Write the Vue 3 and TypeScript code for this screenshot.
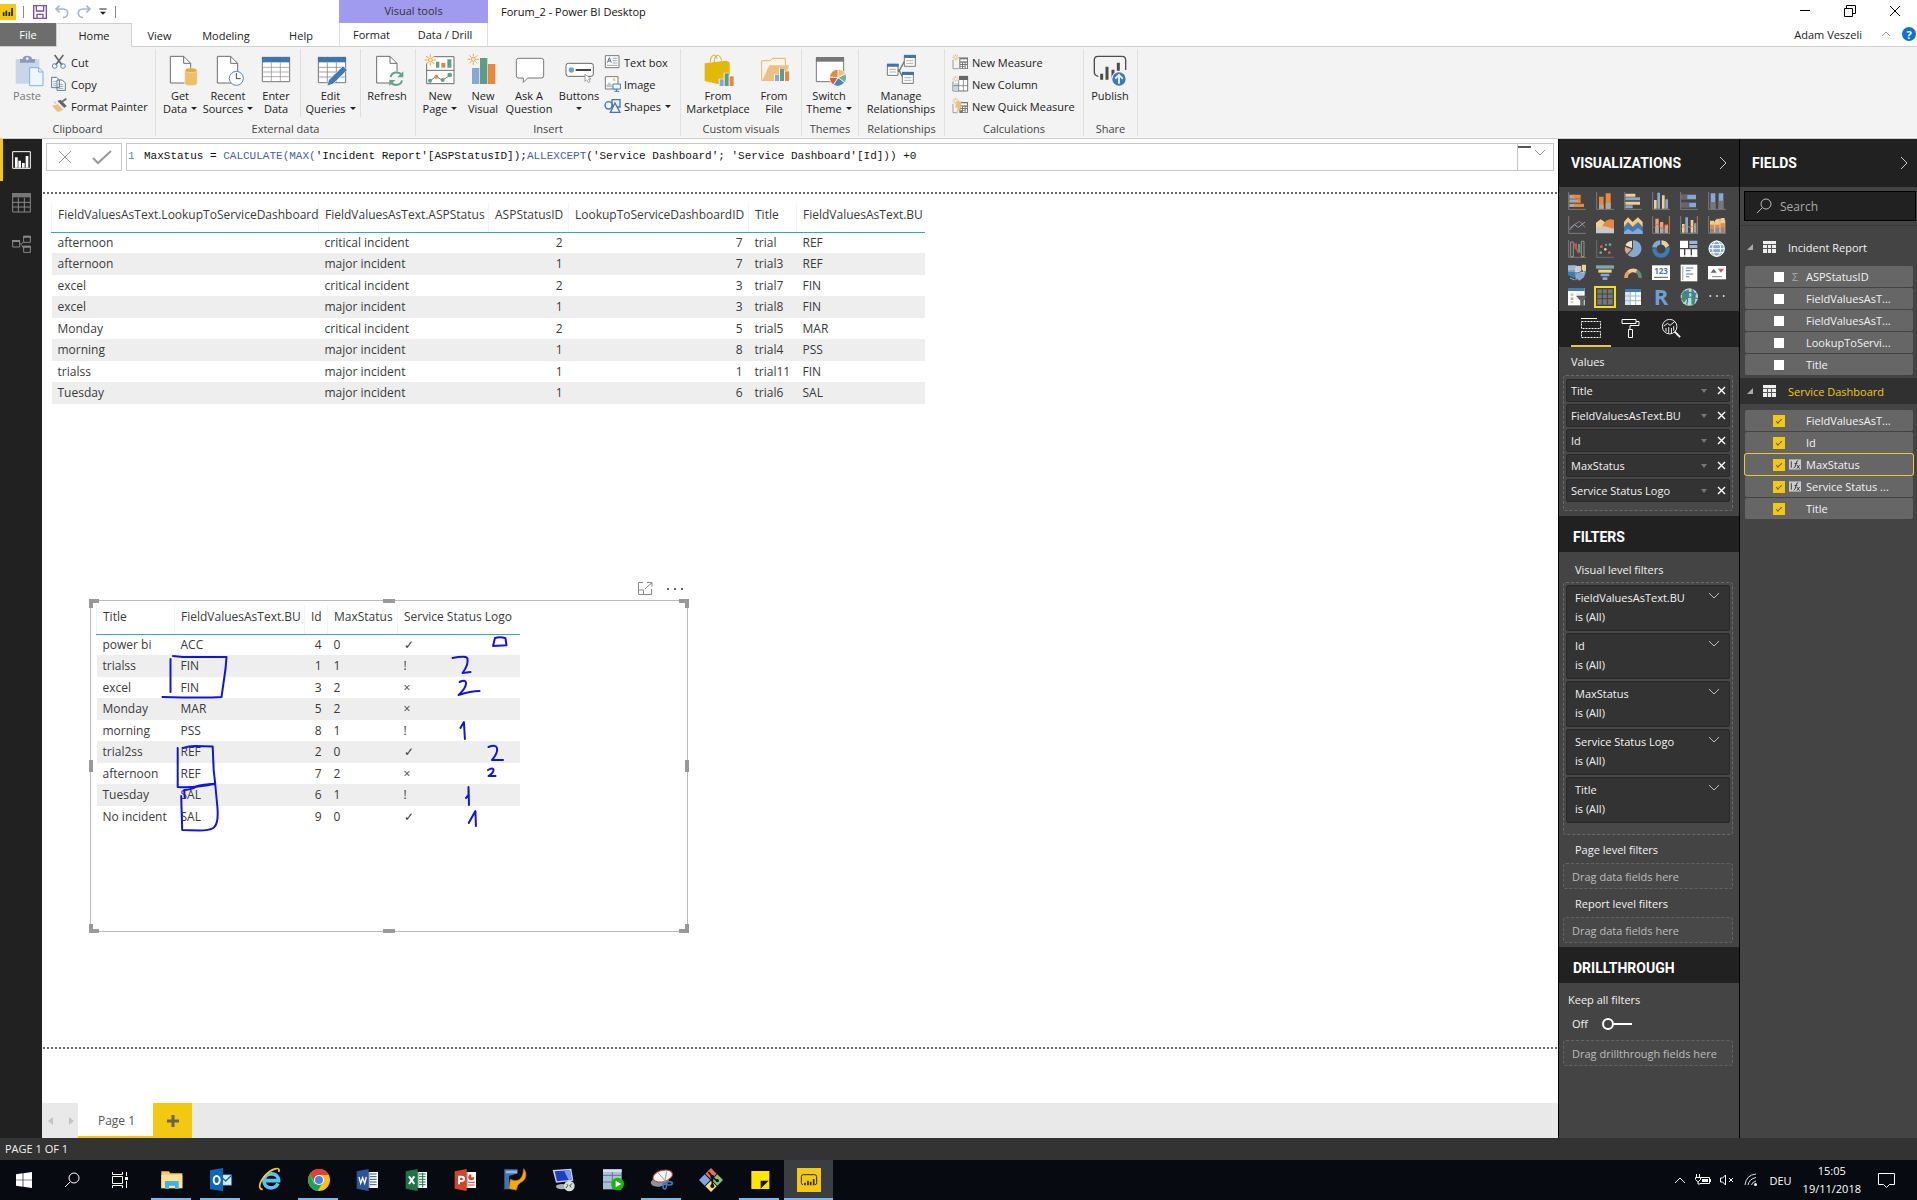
<script setup lang="ts">
import { ref } from 'vue'

interface Icon { box: string; art: string }
interface BigButton { icon: string; lines: string[]; menu?: boolean; width: number; rule?: boolean; dim?: boolean }
interface SmallButton { icon: string; text: string; menu?: boolean }
interface Group { name: string; width: number; inset: number; big: BigButton[]; small: SmallButton[] }
interface Field { name: string; checked: boolean; mark?: 'sum' | 'fx'; active?: boolean }
interface Entity { name: string; used?: boolean; fields: Field[] }
interface Task { icon: string; label: string; open?: boolean; active?: boolean }

const spark = (x: number, y: number) =>
  `<g stroke="#e8a94e" stroke-width="3" fill="none"><circle cx="${x}" cy="${y}" r="6" fill="#fbe6c4"/><path d="M${x} ${y - 17}v8M${x} ${y + 9}v8M${x - 17} ${y}h8M${x + 9} ${y}h8M${x - 12} ${y - 12}l6 6M${x + 6} ${y + 6}l6 6M${x - 12} ${y + 12}l6-6M${x + 6} ${y - 6}l6-6"/></g>`
const miniSpark = (x: number, y: number) =>
  `<path d="M${x} ${y - 10}v20M${x - 10} ${y}h20M${x - 7} ${y - 7}l14 14M${x - 7} ${y + 7}l14-14" stroke="#e8b46a" stroke-width="2.4"/><circle cx="${x}" cy="${y}" r="3" fill="#fff"/>`
const axes = '<path d="M2 0V52H54" fill="none" stroke="#8a8a8a" stroke-width="2.4"/>'
const sheet = (x: number) =>
  `<path d="M${x} 169h40l21 21v59h-61z" fill="#fff" stroke="#6d6d6d" stroke-width="3"/><path d="M${x + 40} 169v21h21" fill="none" stroke="#6d6d6d" stroke-width="3"/>`
const office = (c: string, c2: string, paper: string) =>
  `<path d="M30 12H66V60H30z" fill="#fff"/>${paper}<path d="M2 10L38 3V69L2 62z" fill="${c}"/><path d="M38 12h2v48h-2z" fill="${c2}"/>`

const icons: Record<string, Icon> = {
  paste: { box: '32 162 96 96', art: '<path d="M46 177h71v74H46z" fill="#c9d5ea"/><path d="M59 177h8c0-13 28-13 28 0h9v11H59z" fill="#8a9bb5"/><circle cx="81" cy="176" r="4" fill="#f3f3f3"/><path d="M88 203h28l12 12v42H88z" fill="#eef5fd" stroke="#86b0d8" stroke-width="3"/><path d="M115 203v13h13" fill="none" stroke="#86b0d8" stroke-width="3"/>' },
  getData: { box: '492 162 96 96', art: sheet(511) + '<path d="M554 212v38c0 10 38 10 38 0v-38z" fill="#eebf6b" stroke="#f3f3f3" stroke-width="2"/><ellipse cx="573" cy="211" rx="18" ry="7" fill="#e2a94b" stroke="#f9dfa8" stroke-width="2"/>' },
  recent: { box: '636 162 96 96', art: sheet(652) + '<circle cx="709" cy="235" r="21" fill="#fff" stroke="#5b86b9" stroke-width="3"/><path d="M709 219v17h13" fill="none" stroke="#444" stroke-width="3"/>' },
  enter: { box: '780 162 96 96', art: '<path d="M787 172h82v73h-82z" fill="#fff" stroke="#777" stroke-width="3"/><path d="M786 171h84v16h-84z" fill="#3f74ad"/><path d="M787 202h82M787 216h82M787 230h82M814 187v58M841 187v58" stroke="#999" stroke-width="2.4"/>' },
  edit: { box: '942 162 96 96', art: '<path d="M952 172h82v76h-82z" fill="#fff" stroke="#777" stroke-width="3"/><path d="M951 171h84v16h-84z" fill="#3f74ad"/><path d="M952 202h82M952 216h82M952 231h82M979 187v61M1006 187v61" stroke="#888" stroke-width="2.4"/><path d="M978 258l5-18 43-42 13 12-43 42z" fill="#3f7ab8" stroke="#f3f3f3" stroke-width="2"/>' },
  refresh: { box: '1112 162 96 96', art: sheet(1129) + '<circle cx="1188" cy="236" r="22" fill="#f3f3f3"/><path d="M1171 231c3-16 25-18 33-6M1205 241c-3 16-25 18-33 6" fill="none" stroke="#6aa088" stroke-width="6"/><path d="M1209 214v18h-18zM1167 258v-18h18z" fill="#6aa088"/>' },
  newPage: { box: '74 162 96 96', art: '<path d="M82 170h82v81H82z" fill="#fff" stroke="#6d6d6d" stroke-width="3"/><path d="M82 211h82" stroke="#6d6d6d" stroke-width="3"/><path d="M110 185h10v18h-10zM144 178h12v25h-12z" fill="#5aa08c"/><path d="M126 189h12v14h-12z" fill="#e8833a"/><path d="M90 244l21-15 18 12 27-18" fill="none" stroke="#777" stroke-width="3"/><g fill="#5aa08c"><circle cx="92" cy="242" r="6"/><circle cx="130" cy="240" r="6"/><circle cx="151" cy="225" r="7"/></g><circle cx="111" cy="230" r="6" fill="#e8833a"/><circle cx="93" cy="180" r="15" fill="#f8f1e5"/>' + spark(93, 180) },
  newVisual: { box: '200 162 96 96', art: '<path d="M215 204h22v48h-22z" fill="#86a8d4"/><path d="M239 174h22v78h-22z" fill="#5d9d88"/><path d="M263 192h22v60h-22z" fill="#e8883f"/>' + spark(219, 178) },
  ask: { box: '339 162 96 96', art: '<path d="M355 175h69q7 0 7 7v45q0 7-7 7h-41l-13 13v-13h-15q-6 0-6-7v-45q0-7 6-7z" fill="#fff" stroke="#777" stroke-width="3"/>' },
  buttons: { box: '487 162 96 96', art: '<rect x="496" y="190" width="82" height="39" rx="7" fill="#fff" stroke="#666" stroke-width="3"/><circle cx="512" cy="210" r="8" fill="#6f9fd0"/><path d="M525 210h46" stroke="#444" stroke-width="6"/><path d="M553 222v22l5-5 5 9 5-3-4-8h7z" fill="#fff" stroke="#777" stroke-width="2"/>' },
  market: { box: '907 162 96 96', art: '<path d="M932 186c0-22 16-28 20-10M944 186c0-24 16-28 22-4" fill="none" stroke="#dba710" stroke-width="3"/><path d="M915 190l64-8 11 5v56l-20 13-55-13z" fill="#e2b90a"/><path d="M957 236h15v22h-15zM972 218h15v40h-15zM987 226h16v32h-16z" fill="#f3f3f3"/><path d="M960 238h12v20h-12z" fill="#86a8d4"/><path d="M975 220h12v38h-12z" fill="#5d9d88"/><path d="M990 229h12v29h-12z" fill="#e8883f"/>' },
  fromFile: { box: '1071 162 96 96', art: '<path d="M1082 241v-59h26l7-7h38v66z" fill="#fdf5e6" stroke="#e8b36c" stroke-width="3"/><path d="M1084 241l21-45h60l-18 45z" fill="#eec07f"/><path d="M1119 222h15v21h-15zM1134 205h15v38h-15zM1149 212h16v31h-16z" fill="#f3f3f3"/><path d="M1122 224h12v19h-12z" fill="#86a8d4"/><path d="M1137 206h12v37h-12z" fill="#5d9d88"/><path d="M1152 214h12v29h-12z" fill="#e8883f"/>' },
  theme: { box: '36 162 96 96', art: '<path d="M46 173h82v72H46z" fill="#fff" stroke="#777" stroke-width="3"/><path d="M45 171h84v14H45z" fill="#777"/><circle cx="111" cy="233" r="26" fill="#f3f3f3"/><path d="M111 233V209a24 24 0 0 1 21 12z" fill="#eec07f"/><path d="M111 233l22-11a24 24 0 0 1-2 24z" fill="#77b393"/><path d="M111 233l19 14a24 24 0 0 1-32 7z" fill="#4a83c0"/><path d="M111 233l-13 21a24 24 0 0 1-11-22z" fill="#d3603c"/><path d="M111 233l-24-2a24 24 0 0 1 24-22z" fill="#e8883f"/><path d="M111 233V208M111 233l23-12M111 233l20 15M111 233l-14 22M111 233l-25-2" stroke="#f3f3f3" stroke-width="3"/>' },
  relation: { box: '252 162 96 96', art: '<path d="M290 210h6l14-26h6M290 214h6l8 16h6" fill="none" stroke="#777" stroke-width="4"/><g fill="#fff" stroke="#777" stroke-width="3"><path d="M259 193h32v33h-32zM310 166h33v33h-33zM304 217h33v33h-33z"/></g><path d="M258 191h35v9h-35zM309 165h36v9h-36zM303 216h36v9h-36z" fill="#3f74ad"/><path d="M265 208h20M265 216h20M316 182h21M316 190h21M310 233h21M310 241h21" stroke="#999" stroke-width="2.4"/>' },
  publish: { box: '879 162 96 96', art: '<path d="M892 229q-12-2-12-12v-37q0-11 11-11h72q11 0 11 11v30" fill="none" stroke="#4c4c4c" stroke-width="4"/><path d="M902 221v18M918 200v39M936 209v26M952 188v24" stroke="#4c4c4c" stroke-width="9"/><circle cx="954" cy="237" r="23" fill="#f3f3f3"/><circle cx="954" cy="237" r="20" fill="#3f7ab8"/><path d="M954 251v-24M943 236l11-11 11 11" fill="none" stroke="#fff" stroke-width="5"/>' },
  cut: { box: '153 163 48 48', art: '<path d="M164 166l22 30M190 166l-23 30" stroke="#666" stroke-width="5" fill="none"/><g fill="none" stroke="#5b8cc2" stroke-width="3"><circle cx="164" cy="199" r="7"/><circle cx="189" cy="199" r="7"/></g>' },
  copy: { box: '153 229 48 48', art: '<g fill="#fff" stroke="#5c7590" stroke-width="3"><path d="M155 233h15l8 8v23h-23zM171 241h16l9 9v22h-25z"/></g><path d="M160 245h9M160 252h9M160 258h9M176 254h14M176 260h14M176 266h14" stroke="#5c7590" stroke-width="2"/>' },
  painter: { box: '153 295 48 48', art: '<path d="M156 318l18-4 16 16-13 6-5 0z" fill="#eec07f"/><path d="M172 304l10-4 18 19-7 6z" fill="#666"/><path d="M185 307l14-10" stroke="#777" stroke-width="6"/><path d="M162 306l7 6" stroke="#aaa" stroke-width="3"/>' },
  textBox: { box: '613 162 48 48', art: '<path d="M617 167h41v36h-41z" fill="#fff" stroke="#777" stroke-width="3"/><path d="M623 188l6-15 6 15M625 183h8" fill="none" stroke="#3f74ad" stroke-width="3"/><path d="M639 175h14M639 182h14M639 189h14M622 196h31" stroke="#777" stroke-width="2"/>' },
  image: { box: '613 228 48 48', art: '<path d="M617 230h38v37h-38z" fill="#fff" stroke="#777" stroke-width="3"/><path d="M620 256l9-10 12 16h-21z" fill="#b7c7d8"/><circle cx="643" cy="239" r="4" fill="#eec07f"/><path d="M640 252h22v15h-22z" fill="#fff" stroke="#3f7ab8" stroke-width="3"/><path d="M651 268v6M644 274h15" stroke="#3f7ab8" stroke-width="3"/>' },
  shapes: { box: '613 294 48 48', art: '<g fill="none" stroke="#3f7ab8" stroke-width="4"><circle cx="627" cy="316" r="11"/><path d="M637 299h24v22h-24z"/><path d="M646 309l15 28h-29z" fill="#f3f3f3"/></g>' },
  measure: { box: '455 163 48 48', art: '<path d="M458 181v26h17M475 174h28" fill="none" stroke="#888" stroke-width="2.4"/><path d="M477 175h26v33h-26z" fill="#777"/><path d="M480 179h20v6h-20z" fill="#fff"/><path d="M480 189h5v4h-5zM488 189h5v4h-5zM496 189h4v4h-4zM480 196h5v4h-5zM488 196h5v4h-5zM496 196h4v10h-4zM480 202h5v4h-5zM488 202h5v4h-5z" fill="#fff"/>' + miniSpark(466, 173) },
  column: { box: '455 229 48 48', art: '<path d="M458 246v28h44v-44h-24" fill="#fff" stroke="#777" stroke-width="3"/><path d="M459 250h16v23h-16z" fill="#c9d8e8"/><path d="M476 229h27v12h-27z" fill="#666"/><path d="M475 241v33M489 241v33M459 258h43" stroke="#777" stroke-width="2.4"/>' + miniSpark(466, 238) },
  quick: { box: '455 295 48 48', art: '<path d="M458 313v26h14" fill="none" stroke="#888" stroke-width="2.4"/><path d="M477 307h26v33h-26z" fill="#777"/><path d="M480 311h20v6h-20z" fill="#fff"/><path d="M480 321h5v4h-5zM488 321h5v4h-5zM496 321h4v4h-4zM480 328h5v4h-5zM488 328h5v4h-5zM496 328h4v10h-4zM488 334h5v4h-5z" fill="#fff"/><path d="M470 305h14l-5 13h8l-20 24 5-18h-8z" fill="#eec07f"/>' + miniSpark(466, 304) },

  stackBar: { box: '0 0 54 54', art: axes + '<path d="M4 8h18v12H4zM4 35h18v10H4z" fill="#a9a9a9"/><path d="M4 22h32v10H4z" fill="#a9a9a9"/><path d="M16 8h22v12H16zM28 22h10v10H28zM18 35h30v10H18z" fill="#e8883f"/>' },
  stackCol: { box: '0 0 54 54', art: axes + '<path d="M9 14h14v36H9zM29 4h15v46H29z" fill="#e8883f"/><path d="M9 38h14v12H9zM29 32h15v18H29z" fill="#a9a9a9"/>' },
  clusterBar: { box: '0 0 54 54', art: axes + '<path d="M4 5h30v9H4zM4 29h44v9H4z" fill="#eed08a"/><path d="M4 16h44v9H4zM4 40h22v9H4z" fill="#86a8d4"/>' },
  clusterCol: { box: '0 0 54 54', art: axes + '<path d="M6 24h8v26H6zM30 10h8v40h-8z" fill="#eed08a"/><path d="M16 2h8v48h-8zM40 22h8v28h-8z" fill="#86a8d4"/>' },
  fullBar: { box: '0 0 54 54', art: axes + '<path d="M4 8h44v14H4zM4 32h44v14H4z" fill="#86a8d4"/><path d="M4 8h18v14H4zM4 32h24v14H4z" fill="#666"/>' },
  fullCol: { box: '0 0 54 54', art: axes + '<path d="M8 4h14v46H8zM32 4h14v46H32z" fill="#86a8d4"/><path d="M8 30h14v20H8zM32 26h14v24H32z" fill="#777"/>' },
  line: { box: '0 0 54 54', art: axes + '<path d="M5 42l14-16 12 8 20-16" fill="none" stroke="#86a8d4" stroke-width="3"/><path d="M5 36l14-10 16-10 16 18" fill="none" stroke="#c88" stroke-width="2.4"/>' },
  area: { box: '0 0 54 54', art: '<path d="M0 20l14-10 16 10v30H0z" fill="#eed08a"/><path d="M20 28Q32 4 54 12v38H10z" fill="#e8883f"/><path d="M0 36l22-6 32 8v14H0z" fill="#c9c9c9"/>' },
  stackArea: { box: '0 0 54 54', art: '<path d="M0 18L12 4l14 14L42 4l14 14v14H0z" fill="#eed08a"/><path d="M0 34l12-16 14 14 16-14 14 16v20H0z" fill="#3f7ab8"/><path d="M0 48l12-10 14 10 16-12 14 10v8H0z" fill="#86a8d4"/><path d="M0 32l12-14 14 14 16-14 14 14" fill="none" stroke="#e8883f" stroke-width="3"/>' },
  lineStack: { box: '0 0 54 54', art: axes + '<path d="M52 0v52" stroke="#e8883f" stroke-width="2.4"/><path d="M10 8h10v42H10zM24 18h10v32H24zM38 26h10v24H38z" fill="#e9a27a"/><path d="M10 32h10v18H10zM24 36h10v14H24zM38 38h10v12H38z" fill="#aaa"/><path d="M4 36l12-12 14 14 18-14" fill="none" stroke="#c55" stroke-width="2.4"/>' },
  lineCluster: { box: '0 0 54 54', art: axes + '<path d="M52 0v52" stroke="#e8883f" stroke-width="2.4"/><path d="M6 24h8v26H6zM32 12h8v38h-8z" fill="#eed08a"/><path d="M16 4h8v46h-8zM42 22h7v28h-7z" fill="#86a8d4"/><path d="M4 38l14-14 12 12 18-12" fill="none" stroke="#d97f4a" stroke-width="2.4"/>' },
  ribbonChart: { box: '0 0 54 54', art: axes + '<path d="M6 18h12l8-10h10l6 4h10v38H6z" fill="#d9b79a"/><path d="M6 14h12v12H6zM22 12h12v14H22zM38 6h12v16H38z" fill="#eed08a"/><path d="M6 26h12v12H6zM22 26h12v10H22zM38 22h12v12H38z" fill="#e8883f"/><path d="M6 38h12v12H6zM22 36h12v14H22zM38 34h12v16H38z" fill="#888"/>' },
  waterfall: { box: '0 0 54 54', art: axes + '<path d="M8 6h8v44H8zM40 4h8v46h-8z" fill="none" stroke="#aaa" stroke-width="2.4"/><path d="M20 10h7v18h-7z" fill="#d54f4f"/><path d="M30 12h7v26h-7z" fill="#5d9d78"/><path d="M16 8l16 32" stroke="#d54f4f" stroke-width="4"/>' },
  scatter: { box: '0 0 54 54', art: '<path d="M2 0V52H54" fill="none" stroke="#777" stroke-width="2.4"/><g fill="#d9694f"><circle cx="16" cy="20" r="4"/><circle cx="40" cy="38" r="4"/></g><g fill="#62b394"><circle cx="14" cy="38" r="4"/><circle cx="42" cy="14" r="4"/></g><circle cx="28" cy="28" r="4" fill="#eed08a"/><circle cx="30" cy="14" r="3" fill="#86a8d4"/>' },
  pie: { box: '0 0 54 54', art: '<path d="M27 27V1a25 25 0 1 1-16 44z" fill="#86a8d4"/><path d="M24 24V2A24 24 0 0 0 4 16z" fill="#f6dfc0"/><path d="M23 28L3 20a24 24 0 0 0 6 22z" fill="#dfa28e"/>' },
  donut: { box: '0 0 54 54', art: '<circle cx="27" cy="27" r="20" fill="none" stroke="#3f7ab8" stroke-width="13"/><path d="M27 7a20 20 0 0 1 19 14" fill="none" stroke="#eed08a" stroke-width="13"/><path d="M7 24A20 20 0 0 1 24 7" fill="none" stroke="#86a8d4" stroke-width="13"/><path d="M27 0v16M46 22l8-4M0 24h14" stroke="#444" stroke-width="3"/>' },
  treemap: { box: '0 0 54 54', art: '<path d="M0 2h24v22H0zM0 28h12v22H0zM16 28h16v22H16zM36 28h16v22H36z" fill="#fff"/><path d="M28 2h24v10H28zM28 15h24v9H28z" fill="#9ab7dc"/><path d="M2 48h50" stroke="#fff" stroke-width="4"/>' },
  map: { box: '0 0 54 54', art: '<circle cx="26" cy="26" r="24" fill="#86a8d4"/><g fill="none" stroke="#fff" stroke-width="3"><circle cx="26" cy="26" r="23"/><ellipse cx="26" cy="26" rx="12" ry="23"/><path d="M3 26h46M6 14h40M6 38h40"/></g>' },
  filledMap: { box: '0 0 54 54', art: '<path d="M0 4h22l4 8-6 8H0z" fill="#9ab7dc"/><path d="M24 6h16v14l-12 6-8-4z" fill="#c9c9c9"/><path d="M42 2h12v18l-8 4-4-8z" fill="#eed08a"/><path d="M0 24h22l6 10-10 8L0 34z" fill="#3f7ab8"/><path d="M26 28l28-6-6 18-14 10-10-8z" fill="#86a8d4"/><path d="M0 22h24l24 4M24 4v44M6 42l14 6" stroke="#ddd" stroke-width="2" fill="none"/>' },
  funnel: { box: '0 0 54 54', art: '<path d="M0 4h54v10H0z" fill="#7fa8a8"/><path d="M7 17h40v9H7z" fill="#eed08a"/><path d="M14 29h26v8H14zM20 40h14v8H20z" fill="#86a8d4"/>' },
  gauge: { box: '0 0 54 54', art: '<path d="M6 42a21 21 0 0 1 12-20" fill="none" stroke="#e8a060" stroke-width="11"/><path d="M14 24a22 22 0 0 1 24-2" fill="none" stroke="#eed08a" stroke-width="11"/><path d="M38 22a22 22 0 0 1 10 20" fill="none" stroke="#5f8f78" stroke-width="11"/>' },
  card: { box: '0 0 54 54', art: '<path d="M0 4h54v44H0z" fill="#fff"/><path d="M6 40h42" stroke="#555" stroke-width="3"/><text x="27" y="29" text-anchor="middle" font-family="Open Sans" font-weight="700" font-size="24" fill="#3f7ab8">123</text>' },
  multiCard: { box: '0 0 54 54', art: '<path d="M2 2h50v50H2z" fill="#fff"/><path d="M8 6v42" stroke="#bbb" stroke-width="4"/><path d="M18 12h22M18 30h22" stroke="#86a8d4" stroke-width="5"/><path d="M18 20h14M18 38h10" stroke="#777" stroke-width="3"/>' },
  kpi: { box: '0 0 54 54', art: '<path d="M0 6h54v40H0z" fill="#fff"/><path d="M8 26l9-12 9 12z" fill="#666"/><path d="M30 14h18l-9 12z" fill="#d54f4f"/><path d="M12 38h30" stroke="#888" stroke-width="3"/>' },
  slicer: { box: '0 0 54 54', art: '<path d="M0 0h50v52H0z" fill="#fff"/><path d="M0 0h50v9H0z" fill="#3f7ab8"/><path d="M8 16h8v8H8zM8 40h8v6H8z" fill="#eec07f"/><path d="M8 28h8v8H8z" fill="#aac"/><path d="M22 18h22M22 32h12" stroke="#ccc" stroke-width="2"/><path d="M26 24h32L46 38v16h-8V38z" fill="#666" stroke="#444" stroke-width="2"/>' },
  table: { box: '0 0 54 54', art: '<path d="M4 4h46v46H4z" fill="#777"/><path d="M4 18h46M4 32h46M19 4v46M34 4v46" stroke="#444" stroke-width="3"/>' },
  matrix: { box: '0 0 54 54', art: '<path d="M3 3h48v48H3z" fill="#fff"/><path d="M3 3h48v9H3z" fill="#3f7ab8"/><path d="M3 12h16v39H3z" fill="#d6e3f2"/><path d="M3 24h48M3 38h48M19 12v39M35 12v39" stroke="#9ab7dc" stroke-width="3"/>' },
  rScript: { box: '0 0 54 54', art: '<text x="27" y="51" text-anchor="middle" font-family="Open Sans" font-weight="700" font-size="66" fill="#6f9fd0">R</text>' },
  arcgis: { box: '0 0 54 54', art: '<circle cx="28" cy="27" r="26" fill="#c7d8d8"/><path d="M8 12l18-8 2 20-16 20-8-10zM34 6l14 12-6 30-8 2z" fill="#3f9a4a"/><path d="M4 20Q28 8 50 18M3 34Q28 22 53 32M12 8Q28 24 20 50M36 3Q50 26 40 50" fill="none" stroke="#3f7ab8" stroke-width="4"/>' },
  more: { box: '0 0 54 54', art: '<g fill="#ddd"><circle cx="7" cy="24" r="3"/><circle cx="27" cy="24" r="3"/><circle cx="47" cy="24" r="3"/></g>' },

  explorer: { box: '477 384 72 72', art: '<path d="M481 394h22l5 6h36v44h-63z" fill="#f6c75a"/><path d="M481 404h63v41h-63z" fill="#fde293"/><path d="M492 447v-24h41v24h-11v-10h-18v10z" fill="#3fb3e6"/>' },
  outlook: { box: '624 384 72 72', art: '<path d="M655 404h37v32h-37z" fill="#dbe9f6" stroke="#0a66b8" stroke-width="2"/><path d="M660 410l14 13 18-17" fill="none" stroke="#0a66b8" stroke-width="4"/><path d="M627 391l39-7v70l-39-7z" fill="#0a66b8"/><ellipse cx="647" cy="420" rx="9" ry="12" fill="none" stroke="#fff" stroke-width="6"/>' },
  ie: { box: '771 384 72 72', art: '<path d="M789 422h44c0-26-42-28-44 0 0 26 34 28 42 8" fill="none" stroke="#56c4f4" stroke-width="11"/><path d="M833 396c8-20-24-8-40 10-20 22-22 42-8 42" fill="none" stroke="#f5c92c" stroke-width="5"/>' },
  chrome: { box: '918 384 72 72', art: '<circle cx="954" cy="420" r="33" fill="#fbc116"/><path d="M926 403A33 33 0 0 1 983 404H954z" fill="#dc4437"/><path d="M926 403A33 33 0 0 0 950 453l15-26-26 4z" fill="#1da05a"/><path d="M926 403l16 28 12-27z" fill="#1da05a"/><path d="M926 403A33 33 0 0 1 983 404H950l-12 14z" fill="#dc4437"/><circle cx="954" cy="420" r="15" fill="#fff"/><circle cx="954" cy="420" r="12" fill="#4a80ea"/>' },
  word: { box: '0 0 72 72', art: office('#2a5699', '#173a70', '<path d="M42 18h20M42 26h20M42 34h20M42 42h20M42 50h20" stroke="#2a5699" stroke-width="3"/>') + '<path d="M9 27l5 19 6-17 6 17 5-19" fill="none" stroke="#fff" stroke-width="4"/>' },
  excel: { box: '0 0 72 72', art: office('#1f7246', '#0f5030', '<path d="M42 18h20M42 26h20M42 34h20M42 42h20M42 50h20M53 14v44" stroke="#1f7246" stroke-width="3"/>') + '<path d="M12 25l16 23M28 25L12 48" fill="none" stroke="#fff" stroke-width="6"/>' },
  powerpoint: { box: '0 0 72 72', art: office('#d24625', '#a33316', '<circle cx="52" cy="28" r="9" fill="#d24625"/><path d="M52 28V17h11v11z" fill="#fff"/><path d="M42 43h20M42 51h20" stroke="#d24625" stroke-width="3"/>') + '<path d="M15 49V26h7c11 0 11 13 0 13h-6" fill="none" stroke="#fff" stroke-width="6"/>' },
  sync: { box: '0 0 72 72', art: '<path d="M4 4h40v12L18 24v40H4z" fill="#3a76b8"/><path d="M8 8h34v8H8z" fill="#8db9e4"/><path d="M62 2c12 14 8 34-10 42l-8 8-4 14-22-4 4-28 12 4c16 0 26-8 28-36z" fill="#f5a811" stroke="#c97a00" stroke-width="2"/>' },
  remote: { box: '0 0 72 72', art: '<path d="M2 6l56-4 6 36-52 6z" fill="#c9d3e6"/><path d="M8 10l46-3 5 28-44 5z" fill="#1c3fc4"/><path d="M36 8l18-1 5 28-9 1z" fill="#7d98ee"/><ellipse cx="30" cy="56" rx="18" ry="8" fill="#a8b0b8"/><circle cx="52" cy="54" r="16" fill="#d9ddd9"/><path d="M42 60l6-8-4-3M60 46l-7 8 5 4" fill="none" stroke="#335a33" stroke-width="3"/>' },
  server: { box: '0 0 72 72', art: '<path d="M6 4h56v60H6z" fill="#a9bfd6"/><path d="M6 22h56M6 42h56M34 4v60" stroke="#5c7590" stroke-width="3"/><path d="M6 4h56v8H6z" fill="#d3e0ee"/><circle cx="50" cy="48" r="19" fill="#18b50b"/><path d="M44 38v20l17-10z" fill="#fff"/>' },
  snip: { box: '0 0 72 72', art: '<ellipse cx="30" cy="40" rx="28" ry="15" fill="#8d9299" transform="rotate(-14 30 40)"/><ellipse cx="38" cy="24" rx="30" ry="17" fill="#f5f5f5" stroke="#c84040" stroke-width="3" transform="rotate(-16 38 24)"/><path d="M24 14l26 30M50 10l-6 34" stroke="#999" stroke-width="3"/><g fill="none" stroke="#2f7fb8" stroke-width="5"><ellipse cx="44" cy="54" rx="5" ry="9"/><ellipse cx="58" cy="46" rx="9" ry="5"/></g>' },
  git: { box: '0 0 72 72', art: '<path d="M36 0l17 17-17 17-17-17z" fill="#e86a5e"/><path d="M17 19l17 17-17 17L0 36z" fill="#7ea6e8"/><path d="M55 19l17 17-17 17-17-17z" fill="#86c46a"/><path d="M36 38l17 17-17 17-17-17z" fill="#f7dc7a"/><path d="M28 12l12 14v28M40 28l14 10" fill="none" stroke="#111" stroke-width="5"/><g fill="#111"><circle cx="40" cy="27" r="6"/><circle cx="40" cy="54" r="6"/><circle cx="55" cy="38" r="5"/></g>' },
  sticky: { box: '0 0 72 72', art: '<path d="M10 9h54v54H10z" fill="#ffe600"/><path d="M38 38h24L38 62z" fill="#111"/>' },
  powerbi: { box: '0 0 72 72', art: '<path d="M0 0h72v72H0z" fill="#f2c811"/><path d="M18 50q-5 0-5-6V26q0-6 6-6h34q6 0 6 6v18q0 6-5 6" fill="none" stroke="#2b2b2b" stroke-width="3"/><path d="M24 44v8M33 38v14M41 41v11M50 33v19" stroke="#2b2b2b" stroke-width="5"/>' },
}

const groups: Group[] = [
  { name: 'Clipboard', width: 156, inset: 3, big: [{ icon: 'paste', lines: ['Paste'], width: 48, dim: true }], small: [{ icon: 'cut', text: 'Cut' }, { icon: 'copy', text: 'Copy' }, { icon: 'painter', text: 'Format Painter' }] },
  { name: 'External data', width: 260, inset: 0, big: [
    { icon: 'getData', lines: ['Get', 'Data'], menu: true, width: 48 },
    { icon: 'recent', lines: ['Recent', 'Sources'], menu: true, width: 48 },
    { icon: 'enter', lines: ['Enter', 'Data'], width: 49, rule: true },
    { icon: 'edit', lines: ['Edit', 'Queries'], menu: true, width: 60, rule: true },
    { icon: 'refresh', lines: ['Refresh'], width: 52 }], small: [] },
  { name: 'Insert', width: 265, inset: 2, big: [
    { icon: 'newPage', lines: ['New', 'Page'], menu: true, width: 44 },
    { icon: 'newVisual', lines: ['New', 'Visual'], width: 42 },
    { icon: 'ask', lines: ['Ask A', 'Question'], width: 50 },
    { icon: 'buttons', lines: ['Buttons', ''], menu: true, width: 50 }],
    small: [{ icon: 'textBox', text: 'Text box' }, { icon: 'image', text: 'Image' }, { icon: 'shapes', text: 'Shapes', menu: true }] },
  { name: 'Custom visuals', width: 121, inset: 1, big: [{ icon: 'market', lines: ['From', 'Marketplace'], width: 72 }, { icon: 'fromFile', lines: ['From', 'File'], width: 40 }], small: [] },
  { name: 'Themes', width: 57, inset: 1, big: [{ icon: 'theme', lines: ['Switch', 'Theme'], menu: true, width: 52 }], small: [] },
  { name: 'Relationships', width: 86, inset: 1, big: [{ icon: 'relation', lines: ['Manage', 'Relationships'], width: 82 }], small: [] },
  { name: 'Calculations', width: 139, inset: 7, big: [], small: [{ icon: 'measure', text: 'New Measure' }, { icon: 'column', text: 'New Column' }, { icon: 'quick', text: 'New Quick Measure' }] },
  { name: 'Share', width: 54, inset: 1, big: [{ icon: 'publish', lines: ['Publish'], width: 50 }], small: [] },
]

const incidentHeads = ['FieldValuesAsText.LookupToServiceDashboard', 'FieldValuesAsText.ASPStatus', 'ASPStatusID', 'LookupToServiceDashboardID', 'Title', 'FieldValuesAsText.BU']
const incidents = [
  ['afternoon', 'critical incident', '2', '7', 'trial', 'REF'],
  ['afternoon', 'major incident', '1', '7', 'trial3', 'REF'],
  ['excel', 'critical incident', '2', '3', 'trial7', 'FIN'],
  ['excel', 'major incident', '1', '3', 'trial8', 'FIN'],
  ['Monday', 'critical incident', '2', '5', 'trial5', 'MAR'],
  ['morning', 'major incident', '1', '8', 'trial4', 'PSS'],
  ['trialss', 'major incident', '1', '1', 'trial11', 'FIN'],
  ['Tuesday', 'major incident', '1', '6', 'trial6', 'SAL'],
]
const serviceHeads = ['Title', 'FieldValuesAsText.BU', 'Id', 'MaxStatus', 'Service Status Logo']
const services = [
  ['power bi', 'ACC', '4', '0', '✓'],
  ['trialss', 'FIN', '1', '1', '!'],
  ['excel', 'FIN', '3', '2', '×'],
  ['Monday', 'MAR', '5', '2', '×'],
  ['morning', 'PSS', '8', '1', '!'],
  ['trial2ss', 'REF', '2', '0', '✓'],
  ['afternoon', 'REF', '7', '2', '×'],
  ['Tuesday', 'SAL', '6', '1', '!'],
  ['No incident', 'SAL', '9', '0', '✓'],
]

const visuals = ['stackBar', 'stackCol', 'clusterBar', 'clusterCol', 'fullBar', 'fullCol', 'line', 'area', 'stackArea', 'lineStack', 'lineCluster', 'ribbonChart', 'waterfall', 'scatter', 'pie', 'donut', 'treemap', 'map', 'filledMap', 'funnel', 'gauge', 'card', 'multiCard', 'kpi', 'slicer', 'table', 'matrix', 'rScript', 'arcgis', 'more']
const values = ['Title', 'FieldValuesAsText.BU', 'Id', 'MaxStatus', 'Service Status Logo']
const filters = ['FieldValuesAsText.BU', 'Id', 'MaxStatus', 'Service Status Logo', 'Title']
const dropZones = ['Page level filters', 'Report level filters']

const entities = ref<Entity[]>([
  { name: 'Incident Report', fields: [
    { name: 'ASPStatusID', checked: false, mark: 'sum' },
    { name: 'FieldValuesAsT...', checked: false },
    { name: 'FieldValuesAsT...', checked: false },
    { name: 'LookupToServi...', checked: false },
    { name: 'Title', checked: false }] },
  { name: 'Service Dashboard', used: true, fields: [
    { name: 'FieldValuesAsT...', checked: true },
    { name: 'Id', checked: true },
    { name: 'MaxStatus', checked: true, mark: 'fx', active: true },
    { name: 'Service Status ...', checked: true, mark: 'fx' },
    { name: 'Title', checked: true }] },
])
const keepFilters = ref(false)
const search = ref('')

const tasks: Task[] = [
  { icon: 'explorer', label: 'File Explorer', open: true },
  { icon: 'outlook', label: 'Outlook', open: true },
  { icon: 'ie', label: 'Internet Explorer' },
  { icon: 'chrome', label: 'Chrome', open: true },
  { icon: 'word', label: 'Word' },
  { icon: 'excel', label: 'Excel' },
  { icon: 'powerpoint', label: 'PowerPoint' },
  { icon: 'sync', label: 'Sync' },
  { icon: 'remote', label: 'Remote Desktop' },
  { icon: 'server', label: 'Server' },
  { icon: 'snip', label: 'Snipping Tool', open: true },
  { icon: 'git', label: 'Git' },
  { icon: 'sticky', label: 'Sticky Notes', open: true },
  { icon: 'powerbi', label: 'Power BI Desktop', open: true, active: true },
]
</script>

<template>
  <div class="app">
    <header class="top">
      <div class="quick">
        <svg class="logo" viewBox="0 0 48 48"><path d="M0 0h48v48H0z" fill="#f2c811" /><path d="M11 25v11M19 20v16M28 24v12M36 12v24" stroke="#222" stroke-width="5" /></svg>
        <i class="tick"></i>
        <button aria-label="Save"><svg width="14" height="14" viewBox="0 0 42 42"><path d="M2 2h38v38H2zM10 2v16h22V2M12 40V28h18v12" fill="none" stroke="#7a4fa8" stroke-width="4" /></svg></button>
        <button aria-label="Undo"><svg width="14" height="14" viewBox="0 0 42 42"><path d="M14 2L3 12l11 10M4 12h20c20 2 18 24 0 26" fill="none" stroke="#a9b5cc" stroke-width="5" /></svg></button>
        <button aria-label="Redo"><svg width="14" height="14" viewBox="0 0 42 42"><path d="M28 2l11 10-11 10M38 12H18c-20 2-18 24 0 26" fill="none" stroke="#a9b5cc" stroke-width="5" /></svg></button>
        <button aria-label="Customize toolbar"><svg width="8" height="8" viewBox="0 0 24 24"><path d="M1 3h22" stroke="#222" stroke-width="3" /><path d="M3 11h18l-9 9z" fill="#222" /></svg></button>
        <i class="tick"></i>
      </div>
      <nav class="tabs">
        <button class="file">File</button>
        <button class="home">Home</button>
        <button class="w56">View</button>
        <button class="w78">Modeling</button>
        <button class="w72">Help</button>
      </nav>
      <div class="context">
        <div class="context-title">Visual tools</div>
        <div class="context-tabs"><button>Format</button><button>Data / Drill</button></div>
      </div>
      <div class="doc">Forum_2 - Power BI Desktop</div>
      <div class="right">
        <div class="window">
          <button aria-label="Minimize"><svg width="12" height="12" viewBox="0 0 12 12"><path d="M1 5.500h10" stroke="#000" /></svg></button>
          <button aria-label="Restore"><svg width="12" height="12" viewBox="0 0 12 12"><path d="M.5 3.500h8v8h-8zM2.500 3.500v-3h9v8h-3" fill="none" stroke="#000" /></svg></button>
          <button aria-label="Close"><svg width="12" height="12" viewBox="0 0 12 12"><path d="M1 1l10 10M11 1L1 11" stroke="#000" /></svg></button>
        </div>
        <div class="account">
          <span class="user">Adam Veszeli</span>
          <svg width="10" height="10" viewBox="0 0 10 10"><path d="M1 7l4-4 4 4" fill="none" stroke="#999" /></svg>
          <button class="help" aria-label="Help center">?</button>
        </div>
      </div>
    </header>

    <section class="ribbon">
      <div v-for="g in groups" :key="g.name" class="group" :style="{ width: g.width + 'px' }">
        <div class="tools" :style="{ paddingLeft: g.inset + 'px' }">
          <button v-for="b in g.big" :key="b.icon" class="big" :class="{ rule: b.rule, dim: b.dim }" :style="{ width: b.width + 'px' }">
            <svg class="i32" :viewBox="icons[b.icon].box" v-html="icons[b.icon].art"></svg>
            <span v-for="(l, i) in b.lines" :key="i" class="cap">{{ l }}<i v-if="b.menu && i === 1" class="caret" :class="{ alone: !l }"></i></span>
          </button>
          <div v-if="g.small.length" class="small-list">
            <button v-for="s in g.small" :key="s.icon" class="small">
              <svg class="i16" :viewBox="icons[s.icon].box" v-html="icons[s.icon].art"></svg>
              <span>{{ s.text }}</span><i v-if="s.menu" class="caret"></i>
            </button>
          </div>
        </div>
        <div class="group-name">{{ g.name }}</div>
      </div>
    </section>

    <main class="body">
      <nav class="views">
        <button class="on" aria-label="Report"><svg width="19" height="19" viewBox="0 0 57 57"><path d="M2 2h53v50H2z" fill="none" stroke="#fff" stroke-width="3" /><path d="M13 19v31M23 29v21M34 36v14M45 15v35" stroke="#fff" stroke-width="8" /></svg></button>
        <button aria-label="Data"><svg width="19" height="19" viewBox="0 0 57 57"><path d="M2 2h53v55H2zM2 28h53M2 42h53M19 14v43M37 14v43" fill="none" stroke="#888" stroke-width="3" /><path d="M0 0h57v13H0z" fill="#777" /></svg></button>
        <button aria-label="Model"><svg width="19" height="19" viewBox="0 0 57 57"><path d="M2 18h21v18H2zM35 4h20v18H35zM35 34h20v18H35zM23 27h6l6-8M29 30l6 10" fill="none" stroke="#888" stroke-width="3" /><path d="M0 15h24v6H0zM34 2h22v6H34zM34 32h22v6H34z" fill="#888" /></svg></button>
      </nav>

      <div class="work">
        <div class="formula">
          <div class="decide">
            <button aria-label="Cancel"><svg width="14" height="14" viewBox="0 0 14 14"><path d="M1 1l12 12M13 1L1 13" stroke="#999" /></svg></button>
            <button aria-label="Commit"><svg width="20" height="14" viewBox="0 0 20 14"><path d="M1 8l5 5L19 1" fill="none" stroke="#999" stroke-width="2" /></svg></button>
          </div>
          <div class="code">
            <span class="ln">1</span>
            <div class="src" role="textbox" aria-label="Formula" contenteditable="true" spellcheck="false">MaxStatus = <b>CALCULATE(MAX(</b>'Incident Report'[ASPStatusID]);<b>ALLEXCEPT</b>('Service Dashboard'; 'Service Dashboard'[Id])) +0</div>
            <button class="expand" aria-label="Expand"><svg width="12" height="8" viewBox="0 0 12 8"><path d="M1 1l5 5 5-5" fill="none" stroke="#999" /></svg></button>
          </div>
        </div>

        <div class="canvas">
          <table class="grid first">
            <colgroup><col class="c267" /><col class="c170" /><col class="c80" /><col class="c180" /><col class="c48" /><col class="c128" /></colgroup>
            <thead><tr><th v-for="h in incidentHeads" :key="h">{{ h }}</th></tr></thead>
            <tbody>
              <tr v-for="(r, i) in incidents" :key="i"><td v-for="(c, j) in r" :key="j" :class="{ num: j === 2 || j === 3 }">{{ c }}</td></tr>
            </tbody>
          </table>

          <section class="visual">
            <div class="visual-tools">
              <button aria-label="Focus mode"><svg width="15" height="13" viewBox="0 0 15 13"><path d="M5 0.500H0.500v12h13V7M9 0.500h5v4M14 0.500L7 7M0.500 8h5v4" fill="none" stroke="#888" /></svg></button>
              <button aria-label="More options"><svg width="16" height="4" viewBox="0 0 16 4"><path d="M0 1h2v2H0zM7 1h2v2H7zM14 1h2v2h-2z" fill="#666" /></svg></button>
            </div>
            <table class="grid second">
              <colgroup><col class="c78" /><col class="c130" /><col class="c23" /><col class="c70" /><col class="c122" /></colgroup>
              <thead><tr><th v-for="h in serviceHeads" :key="h">{{ h }}</th></tr></thead>
              <tbody>
                <tr v-for="(r, i) in services" :key="i"><td v-for="(c, j) in r" :key="j" :class="{ num: j === 2, state: j === 4 }">{{ c }}</td></tr>
              </tbody>
            </table>
            <i class="h nw"></i><i class="h n"></i><i class="h ne"></i><i class="h w"></i><i class="h e"></i><i class="h sw"></i><i class="h s"></i><i class="h se"></i>
            <svg class="ink" width="440" height="270" viewBox="0 0 440 270">
              <g fill="none" stroke="#1414e0" stroke-width="2" stroke-linecap="round" stroke-linejoin="round">
                <path d="M90.500 89v33M93 86l10 1h43.500l-1 12-4 28q-16 1-59 0" />
                <path d="M97.700 178v39q20 1 37-3.500M103 178q6-2 12-2l17.700.5 1 24 1.500 13" />
                <path d="M101.200 226l1 34 17 .6q10 0 14-2.600 6-4 4-23l-2-21q-13 0-19 2.500-4 3-12 3.500l.5 8" />
                <path d="M415 68l-2 8 13.500-.7-1-7q-5-2-10.500-.3z" />
                <path d="M372.500 88q15-3 15 1 1 6-5 14l8-1" />
                <path d="M379.600 112q6-3 6.500 1 0 5-7.500 12 12-4 21-4" />
                <path d="M380.400 158l3.500-6 1 17" />
                <path d="M408.500 177q7-3 8.500 1 1 5-5 12h11" />
                <path d="M408 200q5-3 5.500 0 0 3-5 6h7" />
                <path d="M386 228l2.500-3V217l.5 18" />
                <path d="M388.700 253l6.700-12 .5 15" />
              </g>
            </svg>
          </section>
        </div>

        <div class="pages">
          <div class="arrows">
            <button aria-label="Previous page"><i class="left"></i></button>
            <button aria-label="Next page"><i class="next"></i></button>
          </div>
          <button class="page">Page 1</button>
          <button class="add" aria-label="New page"><svg width="12" height="12" viewBox="0 0 12 12"><path d="M6 0v12M0 6h12" stroke="#6b6347" stroke-width="3" /></svg></button>
        </div>
      </div>

      <aside class="viz">
        <h2 class="head tall">VISUALIZATIONS<svg width="8" height="14" viewBox="0 0 8 14"><path d="M1 1l6 6-6 6" fill="none" stroke="#ccc" /></svg></h2>
        <div class="gallery">
          <button v-for="v in visuals" :key="v" :class="{ chosen: v === 'table' }" :aria-label="v"><svg class="i18" :viewBox="icons[v].box" v-html="icons[v].art"></svg></button>
        </div>
        <div class="panes">
          <button class="sel" aria-label="Fields"><svg width="20" height="22" viewBox="0 0 20 22"><path d="M0 1.500h16" stroke="#fff" /><path d="M.5 4.500h19v7H.5zM.5 14.500h19v6H.5z" fill="none" stroke="#fff" stroke-dasharray="2 1" /></svg></button>
          <button aria-label="Format"><svg width="20" height="22" viewBox="0 0 20 22"><path d="M1 2.500h14v4H1zM15 4.500h3v4H9v4M7.500 12.500h4v8h-4z" fill="none" stroke="#fff" /></svg></button>
          <button aria-label="Analytics"><svg width="20" height="20" viewBox="0 0 22 22"><circle cx="9.500" cy="9.500" r="8" fill="none" stroke="#fff" /><path d="M15 15l6 6" stroke="#fff" stroke-width="2" /><path d="M3 9l4-3 3 2 5-4M5.500 11v4M8.500 10v7M11.500 11v6M14 9v5" fill="none" stroke="#fff" /></svg></button>
        </div>
        <div class="label near">Values</div>
        <div class="well">
          <div v-for="v in values" :key="v" class="pill">
            <span>{{ v }}</span>
            <button aria-label="Options" class="opt"><i></i></button>
            <button aria-label="Remove"><svg width="9" height="9" viewBox="0 0 9 9"><path d="M1 1l7 7M8 1L1 8" stroke="#fff" stroke-width="1.400" /></svg></button>
          </div>
        </div>
        <h2 class="head">FILTERS</h2>
        <div class="label far">Visual level filters</div>
        <div class="well filters">
          <div v-for="f in filters" :key="f" class="filter">
            <div><div>{{ f }}</div><div>is (All)</div></div>
            <button aria-label="Expand filter"><svg width="12" height="8" viewBox="0 0 12 8"><path d="M1 1l5 5 5-5" fill="none" stroke="#bbb" /></svg></button>
          </div>
        </div>
        <template v-for="d in dropZones" :key="d">
          <div class="label zone">{{ d }}</div>
          <div class="drop">Drag data fields here</div>
        </template>
        <h2 class="head last">DRILLTHROUGH</h2>
        <div class="keep">Keep all filters</div>
        <label class="switch">Off<input v-model="keepFilters" type="checkbox" /></label>
        <div class="drop">Drag drillthrough fields here</div>
      </aside>

      <aside class="fields">
        <h2 class="head tall">FIELDS<svg width="8" height="14" viewBox="0 0 8 14"><path d="M1 1l6 6-6 6" fill="none" stroke="#ccc" /></svg></h2>
        <label class="search">
          <svg width="16" height="16" viewBox="0 0 16 16"><circle cx="10" cy="6" r="5" fill="none" stroke="#bbb" /><path d="M6 10l-5 5" stroke="#bbb" /></svg>
          <input v-model="search" type="text" placeholder="Search" aria-label="Search" />
        </label>
        <div v-for="e in entities" :key="e.name" class="entity" :class="{ used: e.used }">
          <div class="entity-name">
            <svg width="6" height="6" viewBox="0 0 7 7"><path d="M7 0v7H0z" fill="#aaa" /></svg>
            <svg width="13" height="12" viewBox="0 0 13 12"><path d="M0 0h13v12H0z" fill="#eee" /><path d="M0 3.500h13M0 7.500h13M4.500 3v9M8.500 3v9" stroke="#555" /></svg>
            <span>{{ e.name }}</span>
          </div>
          <label v-for="(f, i) in e.fields" :key="i" class="field" :class="{ active: f.active }">
            <input v-model="f.checked" type="checkbox" />
            <span class="mark"><template v-if="f.mark === 'sum'">Σ</template>
              <svg v-if="f.mark === 'fx'" width="12" height="11" viewBox="0 0 13 11"><path d="M0 0h13v11H0z" fill="#ccc" /><path d="M2.500 2v7M5 9.500Q7 9 7.500 5T10 1.500M6 4.500h3M8.500 6l3 4M11.500 6l-3 4" fill="none" stroke="#333" /></svg></span>
            <span>{{ f.name }}</span>
          </label>
        </div>
      </aside>
    </main>

    <div class="status">PAGE 1 OF 1</div>

    <footer class="taskbar">
      <button class="sys" aria-label="Start"><svg width="16" height="16" viewBox="0 0 48 48"><path d="M0 7l20-3v19H0zM22 4l26-4v23H22zM0 25h20v19L0 41zM22 25h26v23l-26-4z" fill="#fff" /></svg></button>
      <button class="sys" aria-label="Search"><svg width="16" height="16" viewBox="0 0 16 16"><circle cx="10" cy="6" r="5" fill="none" stroke="#fff" /><path d="M6 10l-5 5" stroke="#fff" /></svg></button>
      <button class="sys" aria-label="Task view"><svg width="16" height="16" viewBox="0 0 16 16"><path d="M.5 0v2.500h10V0M.5 16v-2.500h10V16M.5 4.500h10v7H.5zM14.500 0v4M14.500 9v7" fill="none" stroke="#fff" /><path d="M13 5h3v3h-3z" fill="#fff" /></svg></button>
      <div class="tasks">
        <button v-for="t in tasks" :key="t.icon" class="task" :class="{ open: t.open, active: t.active }" :aria-label="t.label"><svg class="i24" :viewBox="icons[t.icon].box" v-html="icons[t.icon].art"></svg></button>
      </div>
      <div class="tray">
        <svg width="12" height="8" viewBox="0 0 12 8"><path d="M1 7l5-5 5 5" fill="none" stroke="#fff" /></svg>
        <svg width="16" height="14" viewBox="0 0 16 14"><path d="M6 4.500h8.500v6H5M15.500 6v3M1.500 1v3M4.500 1v3M.5 4.500h5v2l-2 2h-1l-2-2zM3 8v3h2" fill="none" stroke="#fff" /><path d="M7 6h6v3H7z" fill="#fff" /></svg>
        <svg width="15" height="12" viewBox="0 0 15 12"><path d="M.5 4v4h2l3 3V1l-3 3zM9 4l4 4M13 4L9 8" fill="none" stroke="#fff" /></svg>
        <svg width="14" height="14" viewBox="0 0 14 14"><path d="M1 12Q2 2 12 1M4 12Q5 6 12 4.500M7.500 12Q8 9 12 8" fill="none" stroke="#ddd" /><circle cx="11.500" cy="11.500" r="1.500" fill="#fff" /></svg>
        <span class="lang">DEU</span>
        <div class="clock"><div>15:05</div><div>19/11/2018</div></div>
        <button aria-label="Notifications"><svg width="17" height="17" viewBox="0 0 17 17"><path d="M.5 1.500h16v11h-5l-3 3-3-3h-5z" fill="none" stroke="#fff" /></svg></button>
      </div>
    </footer>
  </div>
</template>

<style>
body { margin: 0; }
</style>

<style scoped>
* { box-sizing: border-box; }
.app { min-height: 100vh; display: flex; flex-direction: column; background: #fff; color: #222; font: 11px/13px "Open Sans", "Noto Sans", sans-serif; white-space: nowrap; }
button { font: inherit; color: inherit; background: none; border: 0; padding: 0; display: flex; align-items: center; justify-content: center; }
h2 { margin: 0; }
svg { flex: none; overflow: visible; }
.i32 { width: 32px; height: 32px; }
.i16 { width: 16px; height: 16px; }
.i18 { width: 18px; height: 18px; }
.i24 { width: 24px; height: 24px; }

.top { display: grid; grid-template-columns: 339px 149px auto 1fr; grid-template-rows: 23px 23px; border-bottom: 1px solid #d0d0d0; }
.quick { display: flex; align-items: center; gap: 8px; grid-area: 1 / 1; }
.quick .logo { width: 16px; height: 16px; }
.quick .tick { width: 1px; height: 12px; background: #888; }
.quick .tick:first-of-type { margin: 0 1px 0 -1px; }
.tabs { grid-area: 2 / 1; display: flex; margin-bottom: -1px; }
.tabs .file { width: 56px; background: #6d6d6d; color: #fff; margin-bottom: 1px; }
.tabs .home { width: 76px; background: #f3f3f3; border: 1px solid #d0d0d0; border-bottom: 0; }
.w56 { width: 55px; }
.w78 { width: 78px; }
.w72 { width: 72px; }
.context { grid-area: 1 / 2 / 3 / 3; display: flex; flex-direction: column; }
.context-title { height: 23px; background: #a09bef; color: #333; display: flex; align-items: center; justify-content: center; padding-bottom: 2px; }
.context-tabs { flex: 1; display: flex; border: solid #ddd; border-width: 0 1px; }
.context-tabs button { flex: 0 0 63px; }
.context-tabs button + button { flex: 1; }
.doc { grid-area: 1 / 3; padding: 5px 0 0 13px; color: #111; }
.right { grid-area: 1 / 4 / 3 / 5; display: flex; flex-direction: column; align-items: flex-end; }
.window { display: flex; gap: 33px; height: 22px; padding-right: 16px; align-items: center; }
.account { display: flex; align-items: center; height: 24px; gap: 11px; padding-right: 1px; }
.account .user { margin-right: 8px; }
.help { width: 14px; height: 14px; border-radius: 50%; background: #0d74cf; color: #fff; font-weight: 700; }

.ribbon { display: flex; background: #f3f3f3; border-bottom: 1px solid #d0d0d0; height: 92px; }
.group { border-right: 1px solid #e0e0e0; margin: 2px 0; display: flex; flex-direction: column; }
.tools { flex: 1; display: flex; }
.big { flex-direction: column; justify-content: flex-start; padding-top: 5px; height: 68px; }
.big .i32 { margin-bottom: 3px; }
.rule { border-right: 1px solid #ddd; }
.dim { color: #777; }
.cap { display: flex; align-items: center; justify-content: center; height: 13px; }
.caret { border: 3px solid transparent; border-top-color: #222; border-bottom: 0; margin-left: 4px; }
.caret.alone, .small .caret { margin-left: 0; }
.small-list { display: flex; flex-direction: column; padding-top: 2px; }
.small { height: 22px; gap: 4px; justify-content: flex-start; }
.group-name { text-align: center; height: 14px; color: #444; }

.body { flex: 1; display: flex; }
.views { width: 42px; background: #212121; display: flex; flex-direction: column; }
.views button { height: 42px; }
.views .on { border-left: 3px solid #f2c811; padding-right: 3px; }
.work { flex: 1; min-width: 0; display: flex; flex-direction: column; }
.formula { display: flex; gap: 4px; padding: 4px 4px 0; height: 53px; }
.decide, .code { height: 28px; border: 1px solid #c8c8c8; display: flex; align-items: center; }
.decide { width: 76px; gap: 20px; padding-left: 11px; }
.code { flex: 1; font: 11px/14px "Liberation Mono", "DejaVu Sans Mono", monospace; color: #111; align-items: flex-start; }
.ln { color: #4a8fa8; width: 17px; padding: 5px 0 0 1px; }
.src { flex: 1; padding-top: 5px; outline: 0; }
.src b { font-weight: 400; color: #4560b0; }
.expand { width: 36px; height: 26px; border-left: 1px solid #c8c8c8; padding: 0 0 8px 8px; position: relative; }
.expand::before { content: ""; position: absolute; left: 0; top: 2px; width: 13px; height: 2px; background: #555; }
.canvas { flex: 1; position: relative; margin-bottom: 54px; min-height: 780px; }
.canvas::before, .canvas::after { content: ""; position: absolute; left: 1px; right: 0; height: 2px; background: repeating-linear-gradient(90deg, #666 0 2px, transparent 2px 4px); }
.canvas::before { top: 0; }
.canvas::after { bottom: 0; }

.grid { border-collapse: collapse; table-layout: fixed; font-size: 12px; line-height: 16px; color: #3a3a3a; }
.grid th, .grid td { padding: 0 6px; text-align: left; font-weight: 400; }
.grid th { height: 29px; border-bottom: 1px solid #3fa8a4; padding-bottom: 5px; border-left: 1px solid #eef7f7; }
.grid td { height: 21px; }
.grid tr:nth-child(even) td { height: 22px; background: #eee; }
.grid td.num { text-align: right; }
.first { position: absolute; left: 9px; top: 11px; width: 873px; }
.second { width: 423px; margin: 4px 0 0 5px; }
.c267 { width: 267px; } .c170 { width: 170px; } .c80 { width: 80px; } .c180 { width: 180px; } .c48 { width: 48px; } .c128 { width: 128px; }
.c78 { width: 78px; } .c130 { width: 130px; } .c23 { width: 23px; } .c70 { width: 70px; } .c122 { width: 122px; }
.visual { position: absolute; left: 48px; top: 408px; width: 598px; height: 332px; border: 1px solid #bbb; }
.visual-tools { position: absolute; right: 4px; top: -19px; display: flex; gap: 14px; }
.h { position: absolute; width: 12px; height: 4px; background: #999; }
.n, .s { left: 292px; }
.nw, .n, .ne { top: -2px; }
.sw, .s, .se { bottom: -2px; }
.w, .e { width: 4px; height: 12px; top: 159px; }
.nw, .sw, .w { left: -2px; }
.ne, .se, .e { right: -2px; }
.nw, .ne, .sw, .se { width: 10px; height: 9px; background: none; border: 0 solid #999; }
.nw { border-width: 4px 0 0 4px; }
.ne { border-width: 4px 4px 0 0; }
.sw { border-width: 0 0 4px 4px; }
.se { border-width: 0 4px 4px 0; }
.ink { position: absolute; left: -11px; top: -31px; pointer-events: none; }

.pages { height: 35px; background: #e9e9e9; display: flex; font-size: 12px; color: #555; }
.arrows { width: 36px; display: flex; justify-content: space-between; padding: 0 4px 0 6px; }
.arrows i { border: 4px solid transparent; }
.arrows .left { border-right: 5px solid #c4c4c4; border-left: 0; }
.arrows .next { border-left: 5px solid #c4c4c4; border-right: 0; }
.page { width: 75px; background: #fff; border-bottom: 2px solid #f2c811; padding: 2px 0 0 2px; }
.add { width: 39px; background: #f2c811; }

.viz, .fields { background: #444; color: #f2f2f2; border-left: 1px solid #000; }
.viz { width: 181px; }
.fields { width: 178px; }
.head { height: 36px; background: #212121; font: 700 14px/18px Roboto, sans-serif; color: #fff; display: flex; align-items: center; justify-content: space-between; padding: 5px 12px 0 14px; }
.head.tall { height: 48px; padding: 0 12px; }
.fields .head.tall { padding-right: 9px; }
.gallery { display: grid; grid-template-columns: repeat(6, 28px); grid-auto-rows: 24px; padding: 2px 0 2px 4px; }
.gallery .chosen { border: 2px solid #f2dc1e; width: 22px; height: 22px; margin: 1px 3px; }
.panes { height: 36px; background: #212121; display: flex; padding-left: 12px; }
.panes button { width: 40px; border-bottom: 2px solid transparent; }
.panes .sel { border-color: #e8c83a; }
.label.near { padding: 8px 12px 7px; }
.well { margin: 0 6px 5px 4px; border: 1px dashed #6a6a6a; border-radius: 3px; padding: 3px 2px 8px; background: #484848; display: flex; flex-direction: column; gap: 2px; }
.pill { height: 23px; background: #333; border: 1px solid #292929; border-radius: 2px; display: flex; align-items: center; padding: 0 3px 0 4px; }
.pill span { flex: 1; }
.pill .opt i { border: 3px solid transparent; border-top: 4px solid #777; border-bottom: 0; margin-right: 10px; }
.label.far { padding: 11px 16px 6px; }
.filters { padding: 2px 2px 11px; margin-bottom: 0; }
.filter { height: 46px; background: #333; border: 1px solid #292929; border-radius: 2px; display: flex; justify-content: space-between; align-items: flex-start; padding: 2px 9px 0 8px; line-height: 19px; }
.filter button { height: 16px; }
.label.zone { padding: 8px 16px 7px; }
.drop { margin: 0 6px 0 4px; height: 26px; border: 1px dashed #636363; border-radius: 3px; background: #484848; color: #bdbdbd; padding: 6px 8px; }
.head.last { margin-top: 4px; }
.keep { padding: 10px 9px; }
.switch { display: flex; align-items: center; gap: 14px; padding: 0 13px; height: 15px; margin-bottom: 9px; }
.switch input { appearance: none; margin: 0; width: 30px; height: 12px; background: linear-gradient(#fff, #fff) 12px 5px / 18px 2px no-repeat; position: relative; }
.switch input::before { content: ""; position: absolute; left: 0; top: 0; width: 12px; height: 12px; border: 2px solid #fff; border-radius: 50%; box-sizing: border-box; }
.search { display: flex; align-items: center; gap: 8px; height: 30px; margin: 4px 1px 0 4px; padding-left: 11px; border: 1px solid #000; background: #212121; font-size: 12px; }
.search input { flex: 1; min-width: 0; border: 0; background: none; outline: 0; font: inherit; color: #ddd; padding: 0; }
.search input::placeholder { color: #aaa; opacity: 1; }
.entity-name { display: flex; align-items: center; height: 26px; padding-left: 7px; margin-bottom: 6px; }
.entity-name svg + svg { margin: 0 12px 0 10px; }
.entity:nth-of-type(1) { border-top: 1px solid #3a3a3a; margin-top: 4px; padding-top: 8px; }
.used .entity-name { background: #303030; color: #f2c811; margin-top: 3px; margin-bottom: 6px; }
.field { display: flex; align-items: center; height: 21px; margin: 0 4px 1px 5px; padding-left: 28px; background: #666; border-radius: 2px; }
.field.active { box-shadow: 0 0 0 1px #e8c83a; }
.field input { appearance: none; margin: 0 3px 0 1px; width: 10px; height: 10px; background: #fff; }
.field input:checked { width: 12px; height: 12px; margin: 0 2px 0 0; background: #f2c811; position: relative; }
.field input:checked::after { content: ""; position: absolute; left: 3px; top: 4px; width: 6px; height: 3px; border: solid #6b5a10; border-width: 0 0 1px 1px; transform: rotate(-45deg); box-sizing: border-box; }
.mark { width: 16px; margin-right: 3px; display: flex; justify-content: center; color: #aaa; }

.status { height: 22px; background: #333; color: #f2f2f2; padding: 4px 5px; }
.taskbar { height: 40px; background: #070b11; color: #fff; display: flex; }
.sys { width: 48px; }
.tasks { display: flex; margin-left: 3px; }
.task { width: 49px; position: relative; }
.task.open::after { content: ""; position: absolute; left: 4px; right: 5px; bottom: 0; height: 2px; background: #76b9ed; }
.task.active { background: #3a3d42; }
.task.active::after { left: 0; right: 0; }
.tray { margin-left: auto; display: flex; align-items: center; padding-right: 22px; gap: 9px; }
.lang { margin: 0 2px; }
.clock { text-align: center; line-height: 18px; margin-right: 8px; }
</style>
